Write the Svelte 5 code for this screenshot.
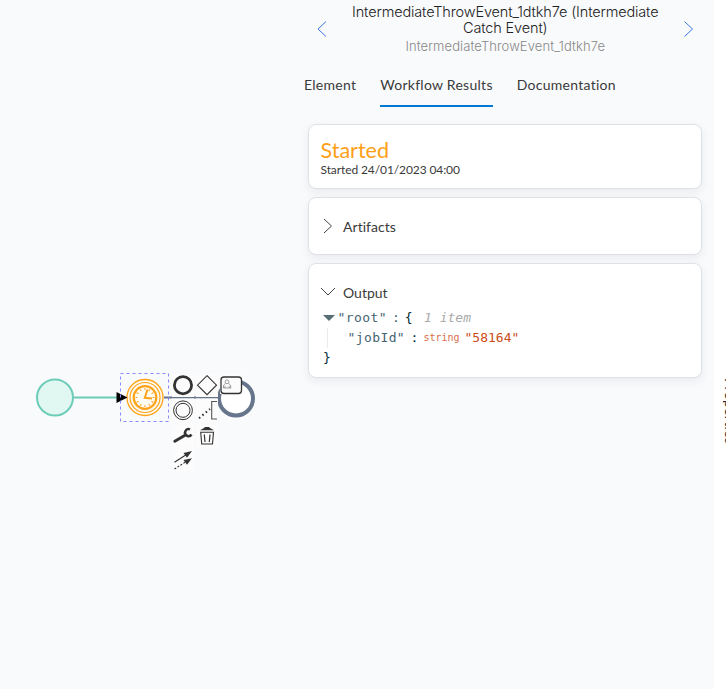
<script>
  const tabs = ['Element', 'Workflow Results', 'Documentation'];
  const active = 'Workflow Results';
  const ticks = Array.from({ length: 12 }, (_, i) => i * 30);
</script>

<div class="app">
  <section class="canvas">
    <svg class="diagram" width="290" height="689" viewBox="0 0 290 689" fill="none">
      <circle cx="55" cy="397.500" r="18" fill="#e0f8f1" stroke="#6dccb8" stroke-width="2" />
      <path d="M74 397.500H117" stroke="#6dccb8" stroke-width="2" />
      <path d="M164 397.500H220" stroke="#677389" stroke-width="2" />
      <circle cx="236" cy="398.500" r="17" fill="#fff" stroke="#66758c" stroke-width="4" />
      <g stroke="#ffa31a">
        <circle cx="145" cy="397.500" r="18" fill="#fffaf0" stroke-width="1.300" />
        <circle cx="145" cy="397.500" r="15" stroke-width="1.200" />
        <circle cx="145" cy="397.500" r="11.300" fill="#fffcf6" stroke-width="2.200" />
        {#each ticks as angle}
          <path d="M145 388v2" stroke-width="1" transform="rotate({angle} 145 397.500)" />
        {/each}
        <path d="M147.500 389.500L144.800 397.800L152 398.600" stroke-width="2" />
      </g>
      <path d="M116.500 392L127.500 397.500L116.500 403Z" fill="#000" />
      <rect x="120.500" y="373.500" width="48" height="48" stroke="#8888ff" stroke-dasharray="3 3" />

      <g fill="#fcfcfd">
        <rect x="172" y="374" width="22" height="23" />
        <rect x="196" y="374" width="22" height="23" />
        <rect x="220" y="374" width="22" height="20" />
        <rect x="172" y="398.500" width="22" height="22.500" />
        <rect x="196" y="398.500" width="22" height="22.500" />
        <rect x="172" y="425" width="22" height="22" />
        <rect x="196" y="425" width="22" height="22" />
        <rect x="172" y="449" width="22" height="22" />
      </g>
      <g stroke="#333">
        <circle cx="183" cy="385.200" r="8.600" stroke-width="2.800" />
        <path d="M207 375.700L216.500 385.200L207 394.700L197.500 385.200Z" stroke-width="1.100" />
        <rect x="221" y="377" width="20.500" height="16.500" rx="3" fill="#fcfcfd" stroke-width="1.300" />
        <circle cx="227" cy="381.800" r="1.900" stroke="#888" stroke-width=".8" />
        <path d="M225.300 383.500Q223.300 384.200 223.200 388H231Q230.800 384.200 228.700 383.500M225 386v2M229.200 386v2" stroke="#888" stroke-width=".8" />
        <circle cx="183" cy="410.300" r="9.400" />
        <circle cx="183" cy="410.300" r="7" />
        <path d="M217 401.500H211.700V419H217" stroke="#555" stroke-width="1.100" />
        <path d="M199 418.200L210 409" stroke-width="2" stroke-dasharray="1.600 2.800" />
        <path d="M174.800 441.300L185.500 435" stroke-width="3" stroke-linecap="round" />
        <path d="M190 429.400A3.500 3.500 0 1 0 191.500 434.500" stroke-width="2.500" />
        <path d="M200 430.200L204 428L205 426.900H209L210 428L214 430.200Z" fill="#333" stroke="none" />
        <path d="M200.700 432.300H213.500L212.500 444H201.700Z" stroke-width="1.100" />
        <path d="M204.300 434.500L205 442M210 434.500L209.300 442" stroke-width="1.200" />
        <path d="M174.500 462.300L188 453.500" stroke-width="1.100" />
        <path d="M174.500 469L188 460.500" stroke-width="1.100" stroke-dasharray="2 1.500" />
        <path d="M192 451L183.500 453L187 457.700ZM192 458.200L183.500 460L187 464.700Z" fill="#333" stroke="none" />
      </g>
    </svg>
  </section>

  <aside class="panel">
    <header>
      <svg class="arrow" width="12" height="18" viewBox="0 0 12 18"><path d="M10 1.500L2 9L10 16.500" /></svg>
      <div class="titles">
        <h1><span>IntermediateThrowEvent_1dtkh7e (Intermediate</span><br /><span>Catch Event)</span></h1>
        <p>IntermediateThrowEvent_1dtkh7e</p>
      </div>
      <svg class="arrow" width="12" height="18" viewBox="0 0 12 18"><path d="M2.500 1.500L10.500 9L2.500 16.500" /></svg>
    </header>

    <nav>
      {#each tabs as tab}
        <span class="tab" class:active={tab === active}>{tab}</span>
      {/each}
    </nav>

    <div class="cards">
      <div class="card status">
        <h2>Started</h2>
        <p>Started 24/01/2023 04:00</p>
      </div>

      <div class="card artifacts">
        <svg width="15" height="16" viewBox="0 0 15 16"><path d="M3 1L10.500 8L3 15" /></svg>
        <span>Artifacts</span>
      </div>

      <div class="card output">
        <div class="row">
          <svg width="15" height="16" viewBox="0 0 15 16"><path d="M0 4L7 11L14 4" /></svg>
          <span>Output</span>
        </div>
        <div class="json">
          <div class="line root">
            <svg width="12" height="6" viewBox="0 0 12 6"><path d="M0 0H12L6 6Z" fill="#586e75" /></svg>
            <span class="key">"root"</span><span class="colon">:</span><span class="brace">&#123;</span><i>1 item</i>
          </div>
          <div class="line child">
            <span class="key">"jobId"</span><span class="colon dark">:</span><span class="type">string</span><span class="value">"58164"</span>
          </div>
          <div class="line end"><span class="brace">&#125;</span></div>
        </div>
      </div>
    </div>
  </aside>

  <div class="rail"><span>Properties</span></div>
</div>

<style>
  .app {
    display: flex;
    width: 726px;
    height: 689px;
    overflow: hidden;
    background: #f9fafc;
    color: #3a3a3a;
    font-family: Lato, sans-serif;
  }
  .canvas { flex: 0 0 300px; }
  .diagram { display: block; }
  .panel { flex: 0 0 413.500px; }
  h1, h2, p { margin: 0; font-weight: 400; }
  header {
    display: flex;
    justify-content: space-between;
    height: 60px;
    padding: 4px 19px 0 16px;
    box-sizing: border-box;
  }
  .arrow { margin-top: 16px; fill: none; stroke: #3975e6; stroke-width: 1; }
  .titles { text-align: center; white-space: nowrap; font-family: Inter, sans-serif; }
  h1 { font-size: 14.500px; line-height: 16px; font-weight: 300; letter-spacing: -.14px; color: #222; }
  .titles p { font-size: 13px; line-height: 16px; margin-top: 2px; font-weight: 300; letter-spacing: .1px; color: #888; }
  nav { display: flex; gap: 24px; padding: 16px 0 0 4px; }
  .tab {
    box-sizing: border-box;
    height: 31px;
    font-size: 14px;
    line-height: 18px;
    letter-spacing: .27px;
    white-space: nowrap;
  }
  .active { border-bottom: 2px solid #0078d4; }
  .cards { display: flex; flex-direction: column; gap: 8px; padding: 17px 12px 0 8px; }
  .card {
    box-sizing: border-box;
    background: #fff;
    border: 1px solid #dfe2e5;
    border-radius: 8px;
    box-shadow: 0 3px 8px rgba(40, 50, 60, .08);
  }
  .status { height: 65px; padding: 13px 11.500px; }
  h2 { font-size: 21.500px; line-height: 25px; color: #ff9f18; }
  .status p { font-size: 12px; line-height: 14px; letter-spacing: -.1px; }
  .artifacts { display: flex; align-items: center; gap: 7px; height: 58px; padding: 0 12px; font-size: 14px; letter-spacing: .05px; }
  .artifacts svg, .row svg { fill: none; stroke: #444; stroke-width: 1; }
  .output { height: 115px; padding: 19px 12px 0; }
  .row { display: flex; align-items: center; gap: 7px; height: 18px; font-size: 14px; }
  .json {
    padding-top: 7px;
    font-family: "DejaVu Sans Mono", monospace;
    font-size: 13px;
    line-height: 20px;
    color: #456470;
    white-space: nowrap;
  }
  .line { display: flex; align-items: center; height: 20px; }
  .root { padding-left: 2px; }
  .root svg { margin-right: 2.500px; }
  .key { letter-spacing: .4px; }
  .colon { margin: 0 5px; }
  .dark, .brace { color: #002b36; }
  i { margin-left: 11.500px; color: #aaa; }
  .child { border-left: 1px solid #ebebeb; margin-left: 6px; padding-left: 19.500px; }
  .child .colon { margin-left: 5.500px; }
  .type { font-size: 10px; color: #d7704b; margin-right: 5px; }
  .value { color: #cb4b16; }
  .end { padding-left: 2px; }
  .rail { flex: 1 0 12.500px; min-width: 0; background: #fff; overflow: hidden; }
  .rail span {
    display: block;
    margin: 378px 0 0 7px;
    writing-mode: vertical-rl;
    width: 18px;
    font-size: 14px;
    line-height: 18px;
    letter-spacing: .3px;
    color: #222;
  }
</style>
